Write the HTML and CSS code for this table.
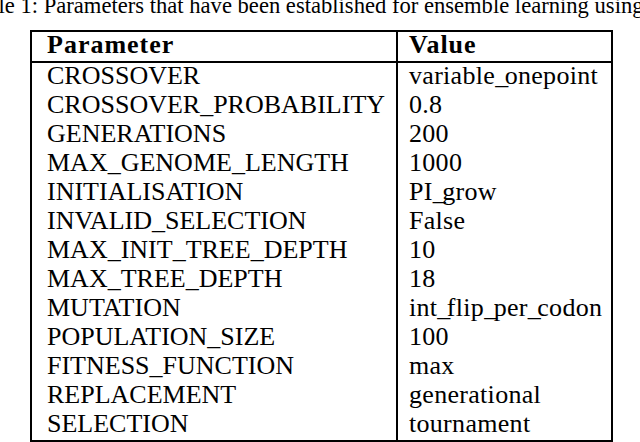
FILE: index.html
```html
<!DOCTYPE html>
<html>
<head>
<meta charset="utf-8">
<link rel="stylesheet" href="styles.css">
</head>
<body>
<div class="page">
  <p class="caption">Table 1: Parameters that have been established for ensemble learning using</p>
  <table class="params">
    <thead>
      <tr><th class="col-name">Parameter</th><th class="col-value">Value</th></tr>
    </thead>
    <tbody>
      <tr><td class="col-name">CROSSOVER</td><td class="col-value">variable<span class="us">_</span>onepoint</td></tr>
      <tr><td class="col-name">CROSSOVER_PROBABILITY</td><td class="col-value">0.8</td></tr>
      <tr><td class="col-name">GENERATIONS</td><td class="col-value">200</td></tr>
      <tr><td class="col-name">MAX_GENOME_LENGTH</td><td class="col-value">1000</td></tr>
      <tr><td class="col-name">INITIALISATION</td><td class="col-value">PI<span class="us">_</span>grow</td></tr>
      <tr><td class="col-name">INVALID_SELECTION</td><td class="col-value">False</td></tr>
      <tr><td class="col-name">MAX_INIT_TREE_DEPTH</td><td class="col-value">10</td></tr>
      <tr><td class="col-name">MAX_TREE_DEPTH</td><td class="col-value">18</td></tr>
      <tr><td class="col-name">MUTATION</td><td class="col-value">int<span class="us">_</span>flip<span class="us">_</span>per<span class="us">_</span>codon</td></tr>
      <tr><td class="col-name">POPULATION_SIZE</td><td class="col-value">100</td></tr>
      <tr><td class="col-name">FITNESS_FUNCTION</td><td class="col-value">max</td></tr>
      <tr><td class="col-name">REPLACEMENT</td><td class="col-value">generational</td></tr>
      <tr><td class="col-name">SELECTION</td><td class="col-value">tournament</td></tr>
    </tbody>
  </table>
</div>
</body>
</html>
```
FILE: styles.css
```css
html, body {
  margin: 0;
  padding: 0;
  background: #fff;
  overflow: hidden;
}
.page {
  width: 640px;
  height: 442px;
  overflow: hidden;
  font-family: "Liberation Serif", "Times New Roman", serif;
  font-size: 26px;
  color: #000;
}
.caption {
  margin: -9px 0 0 -35px;
  white-space: nowrap;
  font-size: 22.6px;
  line-height: 29px;
}
.params {
  margin: 10px 0 0 30px;
  width: 583px;
  table-layout: fixed;
  border-collapse: collapse;
  border: 2px solid #000;
}
.params th, .params td {
  padding: 0 0 4px 0;
  height: 25px;
  line-height: 25px;
  text-align: left;
  white-space: nowrap;
  vertical-align: top;
}
.params th {
  font-weight: bold;
  letter-spacing: 1px;
  border-bottom: 2px solid #000;
}
.col-name {
  width: 349px;
  padding-left: 15px !important;
  border-right: 2px solid #000;
}
.col-value {
  padding-left: 11px !important;
}
td.col-value {
  letter-spacing: 0.3px;
}
.us {
  letter-spacing: -3.5px;
}
```
